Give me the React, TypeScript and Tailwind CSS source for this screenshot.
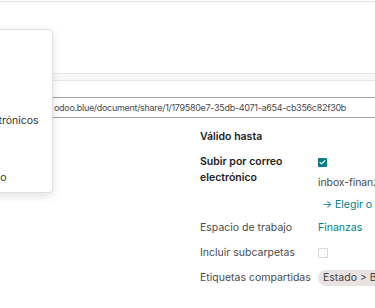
import {Check} from 'lucide-react';

const menuItems = ['Todos', 'Correo', 'Correos electrónicos', 'Enlace', 'Según modelo'];

const Field = ({label, bold, children, className}: {label: string; bold?: boolean; children?: React.ReactNode; className?: string}) => (
	<div className={`flex ${className ?? ''}`}>
		<div className={`w-[118px] shrink-0 leading-[16px] ${bold ? 'font-semibold text-[#222]' : 'whitespace-nowrap text-[#4b4b4b]'}`}>
			{label}
		</div>
		<div className="flex-1 min-w-0 leading-[16px] whitespace-nowrap">{children}</div>
	</div>
);

const App = () => {
	return (
		<div className="relative w-[375px] h-[308px] overflow-hidden bg-white font-['Inter',sans-serif] text-[10.5px] text-[#444]">
			<div className="mt-px border-t border-[#e3e3e3]" />

			<div className="mt-[71px] h-[8px] border-y border-[#e6e6e6] bg-[#f6f8fa]" />

			<div className="mt-[16px] h-[21px] border-y border-[#a39ca6] flex items-center pl-[54px] whitespace-nowrap overflow-hidden text-[9px] tracking-[-0.3px] text-[#4a4a4a]">
				odoo.blue/document/share/1/179580e7-35db-4071-a654-cb356c82f30b
			</div>

			<div className="ml-[200px] mt-[11px] flex flex-col">
				<Field label="Válido hasta" bold />
				<Field label="Subir por correo electrónico" bold className="mt-[9px]">
					<div className="flex h-[16px] items-center">
						<span className="w-[9px] h-[9px] rounded-[1px] bg-[#017e84] flex items-center justify-center">
							<Check size={7} strokeWidth={4} className="text-white" />
						</span>
					</div>
					<div className="mt-[5px] tracking-[-0.1px] text-[#4a4a4a]">inbox-finanzas@odoo.blue</div>
					<div className="mt-[6px] ml-[4px] text-[#017e84]">→ Elegir o crear un alias</div>
				</Field>
				<Field label="Espacio de trabajo" className="mt-[7px]">
					<span className="text-[#017e84]">Finanzas</span>
				</Field>
				<Field label="Incluir subcarpetas" className="mt-[9px]">
					<div className="flex h-[16px] items-center">
						<span className="w-[10px] h-[10px] rounded-[1px] border border-[#d8d8d8] bg-white" />
					</div>
				</Field>
				<Field label="Etiquetas compartidas" className="mt-[9px]">
					<span className="inline-block rounded-full bg-[#e8e2e2] px-[5px] text-[#444]">Estado &gt; Bandeja de entrada</span>
				</Field>
			</div>

			<div className="absolute left-[-130px] top-[29px] w-[183px] h-[164px] bg-white border border-[#dedede] rounded-[4px] shadow-[0_3px_10px_rgba(0,0,0,0.12)] pt-[20px]">
				{menuItems.map(label => (
					<div key={label} className="h-[28.5px] flex items-center pl-[64px] whitespace-nowrap text-[#333]">
						{label}
					</div>
				))}
			</div>
		</div>
	);
};

export default App;
